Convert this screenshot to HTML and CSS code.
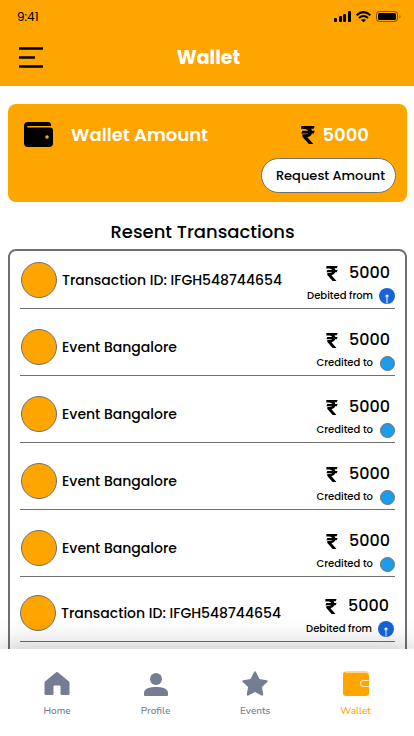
FILE: index.html
```html
<!DOCTYPE html>
<html lang="en">
<head>
<meta charset="utf-8">
<meta name="viewport" content="width=device-width, initial-scale=1">
<title>Wallet</title>
<link rel="stylesheet" href="styles.css">
</head>
<body>
<svg class="defs" aria-hidden="true">
  <symbol id="rupee" viewBox="0 0 12 16"><path d="M0 0h12l-1 2.500H8.700q.6.800.8 1.800H12l-1 2.400H9.400Q8.600 9.500 5.400 9.900L10.800 16H6.700L1 9.500V7.400h2.500Q5.700 7.400 6.200 6.700H0L1 4.300h5.200Q5.500 2.700 3.300 2.700H0z"/></symbol>
  <symbol id="pin" viewBox="0 0 16 16"><circle cx="8" cy="8" r="8" fill="#1565d8"/><circle cx="8" cy="8" r="1.600" fill="#fff"/><path d="M8 8v7.500" stroke="#b5cdf5" stroke-width="1.400"/></symbol>
  <symbol id="dot" viewBox="0 0 16 16"><circle cx="8.500" cy="8.500" r="7" fill="#1c9cea" stroke="#707070"/></symbol>
</svg>
<header class="header">
  <div class="status-bar">
    <span>9:41</span>
    <svg width="68" height="12" viewBox="0 0 68 12" aria-hidden="true">
      <rect x="0" y="7" width="3" height="4" rx="1"/><rect x="5" y="5" width="3" height="6" rx="1"/><rect x="9" y="3" width="3" height="8" rx="1"/><rect x="14" y="0" width="3" height="11" rx="1"/>
      <g fill="none" stroke="#000" stroke-width="2"><path d="M22.600 4.200Q29.500-2 36.400 4.200M25 7Q29.500 3 34 7"/></g><path d="M27 9q2.500-2 5 0l-2.500 2.200z"/>
      <rect x="42.500" y=".5" width="21" height="10" rx="3" fill="none" stroke="#000" stroke-opacity=".5"/><rect x="44" y="2" width="18" height="7" rx="1.500"/><path d="M65.500 3.500q2 2 0 4z" opacity=".5"/>
    </svg>
  </div>
  <div class="title-bar">
    <button class="menu" type="button" aria-label="Menu"><svg width="24" height="22" viewBox="0 0 24 22"><path d="M0 1.500h24M0 10.500h16M0 19.500h24" stroke="#000" stroke-width="2.600"/></svg></button>
    <h1>Wallet</h1>
  </div>
</header>
<main class="content">
  <section class="card">
    <div class="balance">
      <svg width="29" height="26" viewBox="0 0 29 26" aria-hidden="true"><path d="M4 0h20q3 0 3 3v1H4q-1 0-1 .8T4 5.500h22q3 0 3 3V21q0 4-4 4H4q-4 0-4-4V4q0-4 4-4z"/><circle cx="23" cy="15" r="1.800" fill="#ffa500"/></svg>
      <h2>Wallet Amount</h2>
      <svg width="14" height="18" aria-label="Rupees"><use href="#rupee"/></svg>
      <strong>5000</strong>
    </div>
    <button class="request" type="button">Request Amount</button>
  </section>
  <h2 class="list-title">Resent Transactions</h2>
  <ul class="list">
    <li><span class="avatar"></span><span class="name">Transaction ID: IFGH548744654</span><div class="side"><div class="amount"><svg width="12" height="15"><use href="#rupee"/></svg>5000</div><div class="kind">Debited from<svg width="16" height="16"><use href="#pin"/></svg></div></div></li>
    <li><span class="avatar"></span><span class="name">Event Bangalore</span><div class="side"><div class="amount"><svg width="12" height="15"><use href="#rupee"/></svg>5000</div><div class="kind">Credited to<svg width="16" height="16"><use href="#dot"/></svg></div></div></li>
    <li><span class="avatar"></span><span class="name">Event Bangalore</span><div class="side"><div class="amount"><svg width="12" height="15"><use href="#rupee"/></svg>5000</div><div class="kind">Credited to<svg width="16" height="16"><use href="#dot"/></svg></div></div></li>
    <li><span class="avatar"></span><span class="name">Event Bangalore</span><div class="side"><div class="amount"><svg width="12" height="15"><use href="#rupee"/></svg>5000</div><div class="kind">Credited to<svg width="16" height="16"><use href="#dot"/></svg></div></div></li>
    <li><span class="avatar"></span><span class="name">Event Bangalore</span><div class="side"><div class="amount"><svg width="12" height="15"><use href="#rupee"/></svg>5000</div><div class="kind">Credited to<svg width="16" height="16"><use href="#dot"/></svg></div></div></li>
    <li><span class="avatar"></span><span class="name">Transaction ID: IFGH548744654</span><div class="side"><div class="amount"><svg width="12" height="15"><use href="#rupee"/></svg>5000</div><div class="kind">Debited from<svg width="16" height="16"><use href="#pin"/></svg></div></div></li>
  </ul>
</main>
<nav class="tabs">
  <a href="#home"><svg width="28" height="26" viewBox="0 0 28 26"><path d="M14.500 1Q14 .5 13.500 1L2 10.500Q1.500 11 1.500 12v11q0 1 1 1h7q1 0 1-1v-7.500q0-1 1-1h5q1 0 1 1V23q0 1 1 1h7q1 0 1-1V12q0-1-.5-1.500z"/></svg>Home</a>
  <a href="#profile"><svg width="28" height="26" viewBox="0 0 28 26"><circle cx="14" cy="8" r="6"/><path d="M2 22c0-4.500 6-6 12-6s12 1.500 12 6v2q0 1-1 1H3q-1 0-1-1z"/></svg>Profile</a>
  <a href="#events"><svg width="28" height="26" viewBox="0 0 28 26"><path d="M13 1q1-1.500 2 0l3.500 7 7.300 1.200q1.500.5.500 1.700L21 16l1.200 7.500q0 1.500-1.500 1L14 21l-6.700 3.500q-1.500.5-1.500-1L7 16l-5.300-5.100q-1-1.200.5-1.700L9.500 8z"/></svg>Events</a>
  <a href="#wallet" class="active"><svg width="28" height="26" viewBox="0 0 28 26"><path d="M4 0h20q2 0 2.500 2H4q-1 0-1-1z" opacity=".45"/><path d="M3 .5Q3 2 5 2h19q3 0 3 3v17q0 3-3 3H4q-3 0-3-3V3Q1 1 3 .5z"/><path d="M28 9.500h-6.500a3 3 0 0 0 0 6H28" fill="none" stroke="#fff" stroke-opacity=".75" stroke-width="1.200"/></svg>Wallet</a>
</nav>
</body>
</html>
```
FILE: styles.css
```css
* { box-sizing: border-box; }

body {
  margin: 0;
  height: 100vh;
  display: flex;
  flex-direction: column;
  background: #fff;
  color: #000;
  font-family: Poppins, Inter, "Liberation Sans", sans-serif;
}

h1, h2, ul { margin: 0; padding: 0; }
svg { display: block; flex: none; }
button { font: inherit; color: inherit; cursor: pointer; }
.defs { position: absolute; width: 0; height: 0; }

.header { flex: none; height: 86px; background: #ffa500; }
.status-bar {
  display: flex;
  justify-content: space-between;
  align-items: center;
  padding: 9px 12px 0 17px;
  font-size: 12px;
  line-height: 16px;
}
.title-bar {
  display: grid;
  grid-template-columns: 24px 1fr 24px;
  align-items: center;
  padding: 19px 16px 0 19px;
}
.menu { padding: 0; border: 0; background: none; }
h1 {
  text-align: center;
  color: #fff;
  font-size: 19px;
  line-height: 28px;
  font-weight: 700;
}

.content {
  flex: 1;
  min-height: 0;
  overflow-y: auto;
  scrollbar-width: none;
  padding: 18px 7px 0 8px;
}
.card {
  height: 98px;
  padding: 16px 11px 0 16px;
  border-radius: 8px;
  background: #ffa500;
}
.balance {
  display: flex;
  align-items: center;
  height: 30px;
  padding-right: 27px;
  color: #fff;
}
.balance h2 { flex: 1; padding-left: 18px; font-size: 18px; line-height: 26px; font-weight: 600; }
.balance strong { padding-left: 8px; font-size: 18px; line-height: 26px; font-weight: 600; }
.request {
  display: block;
  margin: 8px 0 0 auto;
  width: 135px;
  height: 35px;
  padding: 0 0 0 4px;
  border: 1px solid #707070;
  border-radius: 18px;
  background: #fff;
  font-size: 13px;
  font-weight: 500;
}

.list-title {
  padding: 16px 0 3px;
  text-align: center;
  font-size: 18px;
  line-height: 28px;
  font-weight: 500;
  margin-right: 10px;
}
.list {
  list-style: none;
  border: 2px solid #707070;
  border-radius: 8px;
  padding: 0 10px 20px 10px;
}
.list li {
  display: flex;
  padding: 20px 0 4px 1px;
  border-bottom: 1px solid #707070;
}
.list li:first-child { padding-top: 11px; }
.list li:last-child { padding: 18px 1px 4px 0; }
.avatar {
  flex: none;
  width: 36px;
  height: 36px;
  border: 1px solid #707070;
  border-radius: 50%;
  background: #ffa500;
}
.name {
  flex: 1;
  padding-left: 5px;
  font-size: 14px;
  line-height: 36px;
  font-weight: 500;
  white-space: nowrap;
}
.amount {
  display: flex;
  justify-content: flex-end;
  align-items: center;
  gap: 11px;
  padding-right: 5px;
  font-size: 16px;
  line-height: 22px;
  font-weight: 500;
}
.kind {
  display: flex;
  justify-content: flex-end;
  align-items: center;
  gap: 6px;
  margin-top: 4px;
  font-size: 10px;
  line-height: 16px;
  font-weight: 500;
}

.tabs {
  flex: none;
  position: relative;
  display: flex;
  justify-content: space-between;
  height: 87px;
  padding: 22px 43px 0;
  background: #fff;
  box-shadow: 0 0 30px rgba(0, 0, 0, .28);
}
.tabs a {
  display: flex;
  flex-direction: column;
  align-items: center;
  gap: 6px;
  color: #747d92;
  fill: currentColor;
  font-family: Nunito, "Open Sans", sans-serif;
  font-size: 10px;
  line-height: 16px;
  font-weight: 500;
  text-decoration: none;
}
.tabs .active { color: #ffa500; }
```
